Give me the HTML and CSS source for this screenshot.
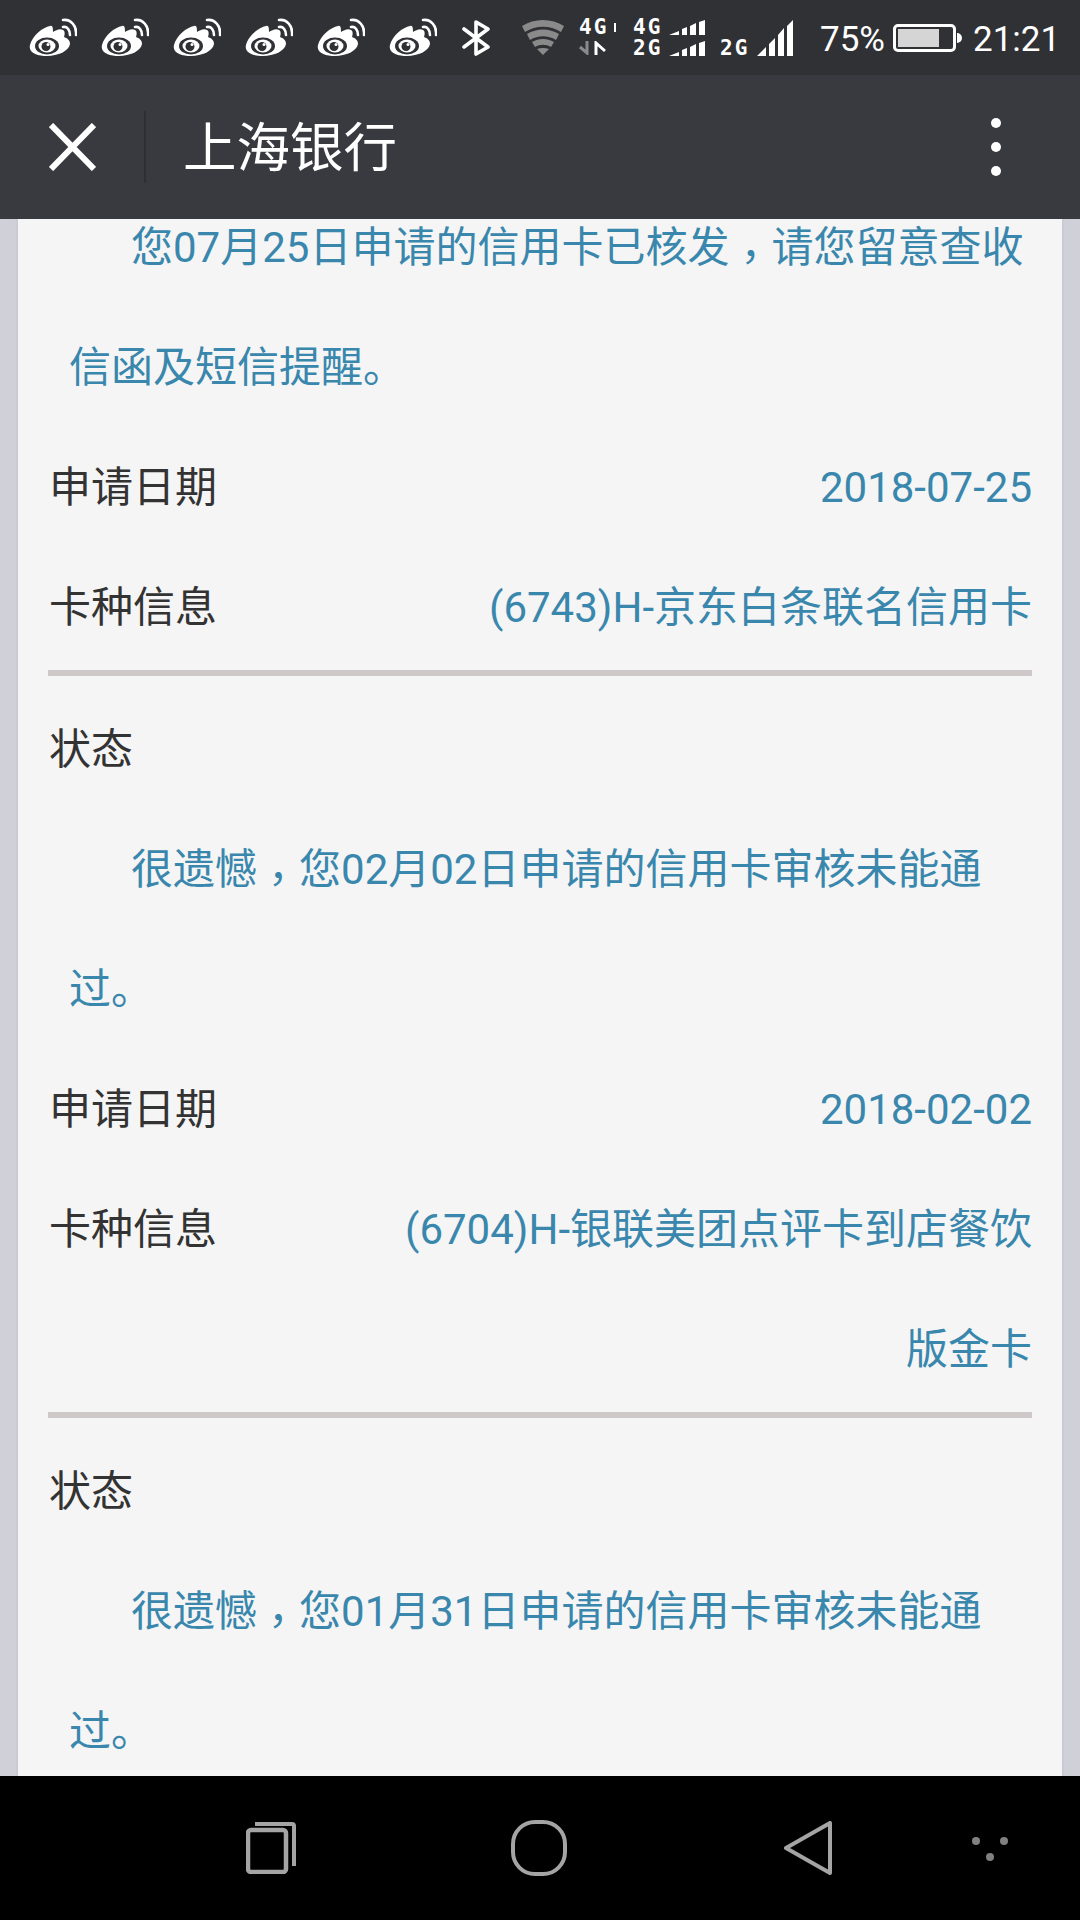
FILE: index.html
```html
<!DOCTYPE html>
<html lang="zh-CN">
<head>
    <meta charset="UTF-8">
    <meta name="viewport" content="width=device-width, initial-scale=1.0">
    <title>上海银行</title>
    <link rel="stylesheet" href="styles.css">
</head>
<body>
    <svg class="defs" width="0" height="0">
        <symbol id="weibo" viewBox="0 0 48 40">
            <path fill="#fff" d="M21 8C14 9 3 18 1 27c-2 8 8 11 17 11 11 0 22-5 23-12 0-4-3-6-6-7 1-3 1-6-1-7-3-2-7 0-10 2 0-3 0-7-3-6z"/>
            <ellipse cx="18" cy="28" rx="12" ry="8.500" fill="#303135"/>
            <ellipse cx="18" cy="28" rx="8.500" ry="6.500" fill="#fff"/>
            <circle cx="17" cy="28.500" r="4.500" fill="#303135"/>
            <circle cx="19" cy="26.500" r="1.500" fill="#fff"/>
            <path fill="none" stroke="#fff" stroke-width="2.600" stroke-linecap="round" d="M34 2c8-1 14 6 13 15M34 9c4-1 7 3 7 8"/>
        </symbol>
        <symbol id="bars" viewBox="0 0 36 15">
            <path fill="#fff" d="M0 15l10-4v4zM13 9l5-2v8h-5zM21 6l6-3v12h-6zM30 2l6-2v15h-6z"/>
        </symbol>
    </svg>

    <div class="status-bar">
        <svg class="weibo"><use href="#weibo"/></svg>
        <svg class="weibo"><use href="#weibo"/></svg>
        <svg class="weibo"><use href="#weibo"/></svg>
        <svg class="weibo"><use href="#weibo"/></svg>
        <svg class="weibo"><use href="#weibo"/></svg>
        <svg class="weibo"><use href="#weibo"/></svg>
        <svg class="bluetooth" viewBox="0 0 30 36"><path fill="none" stroke="#fff" stroke-width="3.600" stroke-linecap="round" stroke-linejoin="round" d="M3 9l24 18-12 7V2l12 7L3 27"/></svg>
        <svg class="wifi" viewBox="0 0 42 35">
            <path fill="#8a8a8a" d="M0 6C12-2 30-2 42 6l-3 6C28 5 14 5 3 12z"/>
            <path fill="#8a8a8a" d="M5 14c10-6 22-6 32 0l-3 6c-8-5-18-5-26 0z"/>
            <path fill="#8a8a8a" d="M10 22c7-4 15-4 22 0l-3 5c-5-3-11-3-16 0z"/>
            <path fill="#8a8a8a" d="M15 29c4-1.500 8-1.500 12 0l-6 6z"/>
        </svg>
        <div class="net net-a">
            <div class="net-row"><span class="net-label">4G</span><span class="tick"></span></div>
            <svg class="arrows" viewBox="0 0 28 14">
                <path fill="none" stroke="#8a8a8a" stroke-width="3" d="M1 6l7 6V0"/>
                <path fill="none" stroke="#fff" stroke-width="3" d="M17 14V2l9 8"/>
            </svg>
        </div>
        <div class="net net-b">
            <div class="net-row">
                <span class="net-label">4G</span>
                <svg class="bars-small"><use href="#bars"/></svg>
            </div>
            <div class="net-row">
                <span class="net-label">2G</span>
                <svg class="bars-small"><use href="#bars"/></svg>
            </div>
        </div>
        <div class="net net-c">
            <span class="net-label">2G</span>
            <svg class="bars-big" viewBox="0 0 36 36"><path fill="#fff" d="M0 36l9-9v9zM12 24l6-6v18h-6zM21 15l6-7v28h-6zM30 6l6-6v36h-6z"/></svg>
        </div>
        <span class="battery-text">75%</span>
        <div class="battery"><div class="battery-fill"></div></div>
        <div class="battery-tip"></div>
        <span class="clock">21:21</span>
    </div>

    <div class="nav-bar">
        <svg class="close" viewBox="0 0 47 48"><path stroke="#fff" stroke-width="6" d="M2 2l43 44M45 2L2 46"/></svg>
        <div class="nav-line"></div>
        <div class="nav-title">上海银行</div>
        <div class="more"><i></i><i></i><i></i></div>
    </div>

    <div class="page">
        <div class="card">
            <div class="record record-first">
                <p class="notice">您07月25日申请的信用卡已核发<span class="comma" lang="zh-TW">，</span>请您留意查收信函及短信提醒。</p>
                <div class="row"><span class="label">申请日期</span><span class="value">2018-07-25</span></div>
                <div class="row"><span class="label">卡种信息</span><span class="value">(6743)H-京东白条联名信用卡</span></div>
            </div>
            <div class="record">
                <div class="row"><span class="label">状态</span></div>
                <p class="notice">很遗憾<span class="comma" lang="zh-TW">，</span>您02月02日申请的信用卡审核未能通过。</p>
                <div class="row"><span class="label">申请日期</span><span class="value">2018-02-02</span></div>
                <div class="row"><span class="label">卡种信息</span><span class="value">(6704)H-银联美团点评卡到店餐饮版金卡</span></div>
            </div>
            <div class="record">
                <div class="row"><span class="label">状态</span></div>
                <p class="notice">很遗憾<span class="comma" lang="zh-TW">，</span>您01月31日申请的信用卡审核未能通过。</p>
            </div>
        </div>
    </div>

    <div class="sys-bar">
        <svg class="sys-recent" viewBox="0 0 50 52">
            <path fill="none" stroke="#a4a4a4" stroke-width="4" d="M9 2h37q2 0 2 2v40"/>
            <rect x="2" y="8" width="38" height="42" rx="3" fill="none" stroke="#a4a4a4" stroke-width="4.500"/>
        </svg>
        <svg class="sys-home" viewBox="0 0 56 56"><rect x="2" y="2" width="52" height="52" rx="22" fill="none" stroke="#a4a4a4" stroke-width="4"/></svg>
        <svg class="sys-back" viewBox="0 0 48 54"><path fill="none" stroke="#a4a4a4" stroke-width="4" stroke-linejoin="round" d="M46 2v50L2 27z"/></svg>
        <svg class="sys-dots" viewBox="0 0 36 24"><g fill="#808080"><circle cx="4" cy="4" r="4"/><circle cx="32" cy="4" r="4"/><circle cx="18" cy="20" r="4"/></g></svg>
    </div>
</body>
</html>
```

FILE: styles.css
```css
* { box-sizing: border-box; }
html, body { margin: 0; padding: 0; }
body { width: 1080px; height: 1920px; display: flex; flex-direction: column; overflow: hidden; background-color: #000; font-family: Roboto, "Noto Sans CJK SC", sans-serif; }
.defs { position: absolute; }

/* status bar */
.status-bar { height: 75px; flex: none; display: flex; align-items: center; padding-left: 29px; background-color: #303135; color: #fff; }
.weibo { width: 48px; height: 40px; margin-right: 24px; }
.bluetooth { width: 30px; height: 36px; margin-right: 31px; }
.wifi { width: 42px; height: 35px; margin-right: 15px; }
.net { display: flex; flex-direction: column; gap: 6px; }
.net-a { width: 54px; }
.net-b { width: 87px; }
.net-c { width: 73px; flex-direction: row; align-items: flex-end; gap: 9px; height: 36px; }
.net-row { display: flex; align-items: center; height: 15px; }
.net-label { width: 28px; font-family: "DejaVu Sans Mono", monospace; font-weight: bold; font-size: 21px; line-height: 15px; letter-spacing: 2px; }
.tick { width: 2px; height: 9px; margin-left: 7px; background-color: #fff; }
.arrows { width: 28px; height: 14px; }
.bars-small { width: 36px; height: 15px; margin-left: 8px; }
.bars-big { width: 36px; height: 36px; }
.battery-text, .clock { font-size: 35px; line-height: 40px; padding-top: 4px; }
.battery-text { margin-left: 27px; width: 73px; }
.battery { width: 63px; height: 28px; padding: 2px; border: 3px solid #fff; border-radius: 5px; }
.battery-fill { width: 41px; height: 100%; background-color: #d5d5d5; }
.battery-tip { width: 5px; height: 10px; margin-left: 1px; background-color: #fff; border-radius: 0 5px 5px 0; }
.clock { margin-left: 11px; }

/* title bar */
.nav-bar { height: 144px; flex: none; display: flex; align-items: center; background-color: #393a40; color: #fff; }
.close { width: 47px; height: 48px; margin-left: 49px; }
.nav-line { width: 2px; height: 72px; margin-left: 48px; background-color: #2e2f33; }
.nav-title { margin-left: 37px; padding-top: 3px; font-size: 53.5px; line-height: 72px; }
.more { margin-left: auto; margin-right: 79px; display: flex; flex-direction: column; gap: 14px; }
.more i { display: block; width: 10px; height: 10px; border-radius: 50%; background-color: #fff; }

/* scrolled page */
.page { flex: 1; min-height: 0; overflow: hidden; padding: 0 18px; background-color: #d0d1d8; }
.card { display: flow-root; height: 100%; padding: 0 30px; background-color: #f5f5f5; box-shadow: 0 0 3px #b9bac4; font-size: 42px; line-height: 120px; color: #333; }
.record { padding: 14px 0 2px; border-bottom: 6px solid #cfc8c8; }
.record:last-child { border-bottom: none; }
.record-first { margin-top: -31px; padding-top: 0; }
.notice { margin: 0; padding-left: 21px; text-indent: 62px; color: #3a87ad; }
.comma { font-family: "Noto Sans CJK TC", sans-serif; line-height: 0; vertical-align: -10px; }
.row { display: flex; justify-content: space-between; }
.label { flex: none; padding-left: 1px; }
.value { width: 650px; text-align: right; color: #3a87ad; }

/* system buttons */
.sys-bar { height: 144px; flex: none; display: flex; align-items: flex-start; padding: 44px 0 0 246px; background-color: #000; }
.sys-recent { width: 50px; height: 52px; margin-top: 2px; margin-right: 215px; }
.sys-home { width: 56px; height: 56px; margin-right: 217px; }
.sys-back { width: 48px; height: 54px; margin-top: 1px; margin-right: 140px; }
.sys-dots { width: 36px; height: 24px; margin-top: 17px; }
```
